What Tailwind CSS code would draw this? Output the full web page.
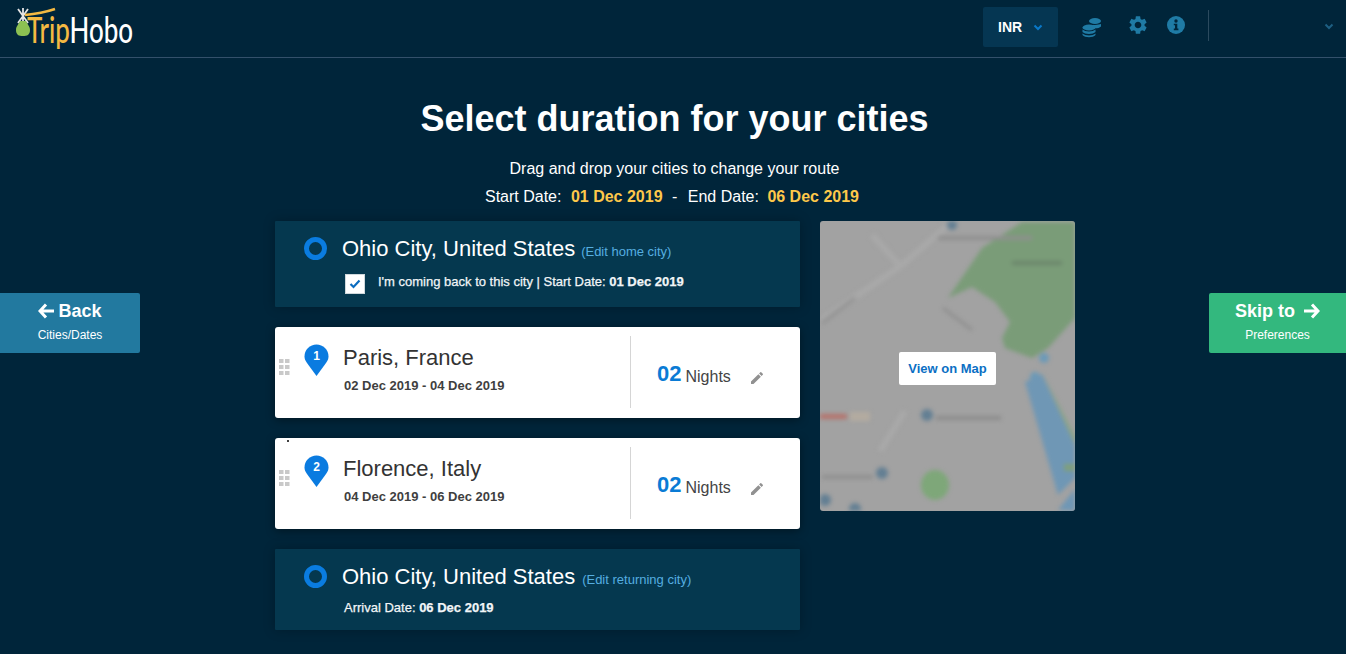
<!DOCTYPE html>
<html lang="en">
<head>
    <meta charset="UTF-8">
    <title>TripHobo - Select duration</title>
    <script src="https://cdn.jsdelivr.net/npm/@tailwindcss/browser@4"></script>
</head>
<body class="w-[1346px] h-[654px] overflow-hidden bg-[#00253a] text-white font-['Liberation_Sans',Arial,sans-serif]">

    <!-- top bar -->
    <header class="h-[58px] flex items-start border-b border-[#33506a]">
        <svg class="ml-[14px] mt-[6px] overflow-visible" width="124" height="48" viewBox="0 0 124 48">
            <path d="M4 3 L14 17 M14 3 L4 17 M9 2 V15" stroke="#e4e4e4" stroke-width="1.8" fill="none"/>
            <path d="M6 15 C5 18 2 20 2 24 C2 29 5 30 9 30 C13 30 16 29 16 24 C16 20 13 18 12 15 Z" fill="#8cc152"/>
            <path d="M11 9 C22 8 32 6 41 3" stroke="#f4b942" stroke-width="2.6" fill="none"/>
            <text x="13" y="37" font-family="Lato" font-size="36" font-weight="500" textLength="106" lengthAdjust="spacingAndGlyphs"><tspan fill="#f4b942">Trip</tspan><tspan fill="#ffffff">Hobo</tspan></text>
        </svg>
        <div class="ml-[845px] mt-[7px] w-[75px] h-[40px] bg-[#053652] flex items-center pl-[15px] rounded-[2px]">
            <span class="text-[14px] font-bold">INR</span>
            <svg class="ml-[11px]" width="10" height="7" viewBox="0 0 10 7"><path d="M1.5 1.5 L5 5 L8.5 1.5" stroke="#0a78c8" stroke-width="2" fill="none"/></svg>
        </div>
        <svg class="ml-[24px] mt-[17px]" width="20" height="21" viewBox="0 0 20 21" fill="#1f7ba5">
            <ellipse cx="13" cy="4" rx="6" ry="3"/>
            <path d="M7 8.5 C9 8 17 8 19 7 V9.5 C17 11.5 13 11.5 11 11 Z"/>
            <ellipse cx="7" cy="10.5" rx="6.5" ry="3"/>
            <path d="M0.5 12.5 C3 15 11 15 13.5 12.5 V15 C11 17.5 3 17.5 0.5 15 Z"/>
            <path d="M0.5 16.5 C3 19 11 19 13.5 16.5 V18 C11 21 3 21 0.5 18 Z"/>
        </svg>
        <svg class="ml-[25px] mt-[14px]" width="22" height="22" viewBox="0 0 24 24" fill="#1f7ba5"><path d="M19.14 12.94c.04-.3.06-.61.06-.94 0-.32-.02-.64-.07-.94l2.03-1.58a.49.49 0 0 0 .12-.61l-1.92-3.32a.488.488 0 0 0-.59-.22l-2.39.96c-.5-.38-1.03-.7-1.62-.94l-.36-2.54a.484.484 0 0 0-.48-.41h-3.84c-.24 0-.43.17-.47.41l-.36 2.54c-.59.24-1.13.57-1.62.94l-2.39-.96c-.22-.08-.47 0-.59.22L2.74 8.87c-.12.21-.08.47.12.61l2.03 1.58c-.05.3-.09.63-.09.94s.02.64.07.94l-2.03 1.58a.49.49 0 0 0-.12.61l1.92 3.32c.12.22.37.29.59.22l2.39-.96c.5.38 1.03.7 1.62.94l.36 2.54c.05.24.24.41.48.41h3.84c.24 0 .44-.17.47-.41l.36-2.54c.59-.24 1.13-.56 1.62-.94l2.39.96c.22.08.47 0 .59-.22l1.92-3.32c.12-.22.07-.47-.12-.61l-2.01-1.58zM12 15.6c-1.98 0-3.6-1.62-3.6-3.6s1.62-3.6 3.6-3.6 3.6 1.62 3.6 3.6-1.62 3.6-3.6 3.6z"/></svg>
        <svg class="ml-[18px] mt-[16px]" width="18" height="18" viewBox="0 0 18 18"><circle cx="9" cy="9" r="9" fill="#1f7ba5"/><circle cx="9" cy="5" r="1.7" fill="#00253a"/><path d="M6.8 7.7 H10.3 V12.6 H11.4 V14.2 H6.8 V12.6 H8 V9.3 H6.8 Z" fill="#00253a"/></svg>
        <div class="ml-[23px] mt-[10px] w-px h-[31px] bg-[#2b4a5e]"></div>
        <svg class="ml-[115px] mt-[23px]" width="10" height="7" viewBox="0 0 10 7"><path d="M1.5 1.5 L5 5 L8.5 1.5" stroke="#1d5f82" stroke-width="2" fill="none"/></svg>
    </header>

    <!-- heading -->
    <div class="text-center pl-[3px]">
        <h1 class="mt-[40px] text-[36px] leading-[42px] font-bold">Select duration for your cities</h1>
        <p class="mt-[19px] text-[16px] leading-[20px]">Drag and drop your cities to change your route</p>
        <p class="mt-[8px] pr-[5px] text-[16px] leading-[20px]">Start Date: <b class="ml-[5px] text-[#fdc84a]">01 Dec 2019</b> <span class="ml-[5px] mr-[6px]">-</span> End Date: <b class="ml-[4px] text-[#fdc84a]">06 Dec 2019</b></p>
    </div>

    <div class="flex mt-[14px] items-start">
        <!-- back -->
        <a class="mt-[72px] w-[140px] h-[60px] bg-[#22799f] rounded-r-[2px] flex flex-col items-center shrink-0">
            <span class="mt-[6px] text-[18px] leading-[24px] font-bold flex items-center gap-[3px]">
                <svg width="17" height="16" viewBox="0 0 17 16"><path d="M8 1.5 L2 8 L8 14.5 M2.5 8 H16" stroke="#fff" stroke-width="3" fill="none"/></svg>Back</span>
            <span class="mt-[4px] text-[12px] leading-[16px]">Cities/Dates</span>
        </a>

        <!-- route -->
        <div class="ml-[135px] w-[525px] shrink-0 flex flex-col gap-[20px]">
            <section class="h-[86px] bg-[#05384f] rounded-[1px] shadow-[0_0_12px_rgba(0,0,0,0.25)] pt-[15px] pl-[29px]">
                <div class="flex items-center h-[24px]">
                    <span class="w-[23px] h-[23px] rounded-full border-[5px] border-[#0a7ce0]"></span>
                    <span class="ml-[15px] mt-[2px] text-[22px] leading-[24px]">Ohio City, United States</span>
                    <span class="ml-[6px] mt-[8px] text-[13px] text-[#55aee0]">(Edit home city)</span>
                </div>
                <div class="flex items-center mt-[14px] ml-[41px]">
                    <span class="w-[20px] h-[20px] bg-white border border-[#cfd8dc] flex items-center justify-center">
                        <svg width="12" height="10" viewBox="0 0 12 10"><path d="M1.5 5 L4.5 8 L10.5 1.5" stroke="#0b6cc0" stroke-width="2.2" fill="none"/></svg>
                    </span>
                    <span class="ml-[13px] text-[13px] text-[#f2f5f7] leading-[18px] -mt-[4px] [-webkit-text-stroke:0.25px]">I'm coming back to this city | Start Date: <b>01 Dec 2019</b></span>
                </div>
            </section>

            <section class="h-[91px] bg-white rounded-[3px] shadow-[0_2px_10px_rgba(0,0,0,0.4)] flex text-[#333]">
                <svg class="ml-[4px] mt-[32px]" width="11" height="17" viewBox="0 0 11 17" fill="#c9c9c9"><rect x="0" y="0" width="4.5" height="4"/><rect x="6" y="0" width="4.5" height="4"/><rect x="0" y="6" width="4.5" height="4"/><rect x="6" y="6" width="4.5" height="4"/><rect x="0" y="12" width="4.5" height="4"/><rect x="6" y="12" width="4.5" height="4"/></svg>
                <div class="relative ml-[14px] mt-[17px] w-[25px] h-[32px]">
                    <svg width="25" height="32" viewBox="0 0 25 32"><path d="M12.5 32 L3 19 C1 16 0.5 14.5 0.5 12.5 A12 12 0 0 1 24.5 12.5 C24.5 14.5 24 16 22 19 Z" fill="#0a7be0"/></svg>
                    <span class="absolute top-[5px] left-0 w-full text-center text-[12px] leading-[14px] font-bold text-white">1</span>
                </div>
                <div class="ml-[14px] mt-[18px]">
                    <div class="text-[22px] leading-[26px]">Paris, France</div>
                    <div class="mt-[6px] ml-[1px] text-[13px] font-bold leading-[18px] text-[#3f3f3f]">02 Dec 2019 - 04 Dec 2019</div>
                </div>
                <div class="ml-auto mt-[9px] w-[170px] h-[72px] border-l border-[#d5d5d5] flex items-start">
                    <span class="ml-[26px] mt-[23px] text-[22px] leading-[30px] font-bold text-[#0a7bd5]">02</span>
                    <span class="ml-[4px] mt-[31px] text-[16px] leading-[20px] text-[#444]">Nights</span>
                    <svg class="ml-[18px] mt-[34px]" width="16" height="16" viewBox="0 0 24 24" fill="#919191"><path d="M3 17.25V21h3.75L17.81 9.94l-3.75-3.75L3 17.25zM20.71 7.04a1 1 0 0 0 0-1.41l-2.34-2.34a1 1 0 0 0-1.41 0l-1.83 1.83 3.75 3.75 1.83-1.83z"/></svg>
                </div>
            </section>

            <section class="relative h-[91px] bg-white rounded-[3px] shadow-[0_2px_10px_rgba(0,0,0,0.4)] flex text-[#333]">
                <span class="absolute left-[12px] top-[2px] w-[2px] h-[2px] bg-black rounded-full"></span>
                <svg class="ml-[4px] mt-[32px]" width="11" height="17" viewBox="0 0 11 17" fill="#c9c9c9"><rect x="0" y="0" width="4.5" height="4"/><rect x="6" y="0" width="4.5" height="4"/><rect x="0" y="6" width="4.5" height="4"/><rect x="6" y="6" width="4.5" height="4"/><rect x="0" y="12" width="4.5" height="4"/><rect x="6" y="12" width="4.5" height="4"/></svg>
                <div class="relative ml-[14px] mt-[17px] w-[25px] h-[32px]">
                    <svg width="25" height="32" viewBox="0 0 25 32"><path d="M12.5 32 L3 19 C1 16 0.5 14.5 0.5 12.5 A12 12 0 0 1 24.5 12.5 C24.5 14.5 24 16 22 19 Z" fill="#0a7be0"/></svg>
                    <span class="absolute top-[5px] left-0 w-full text-center text-[12px] leading-[14px] font-bold text-white">2</span>
                </div>
                <div class="ml-[14px] mt-[18px]">
                    <div class="text-[22px] leading-[26px]">Florence, Italy</div>
                    <div class="mt-[6px] ml-[1px] text-[13px] font-bold leading-[18px] text-[#3f3f3f]">04 Dec 2019 - 06 Dec 2019</div>
                </div>
                <div class="ml-auto mt-[9px] w-[170px] h-[72px] border-l border-[#d5d5d5] flex items-start">
                    <span class="ml-[26px] mt-[23px] text-[22px] leading-[30px] font-bold text-[#0a7bd5]">02</span>
                    <span class="ml-[4px] mt-[31px] text-[16px] leading-[20px] text-[#444]">Nights</span>
                    <svg class="ml-[18px] mt-[34px]" width="16" height="16" viewBox="0 0 24 24" fill="#919191"><path d="M3 17.25V21h3.75L17.81 9.94l-3.75-3.75L3 17.25zM20.71 7.04a1 1 0 0 0 0-1.41l-2.34-2.34a1 1 0 0 0-1.41 0l-1.83 1.83 3.75 3.75 1.83-1.83z"/></svg>
                </div>
            </section>

            <section class="h-[81px] bg-[#05384f] rounded-[1px] shadow-[0_0_12px_rgba(0,0,0,0.25)] pt-[15px] pl-[29px]">
                <div class="flex items-center h-[24px]">
                    <span class="w-[23px] h-[23px] rounded-full border-[5px] border-[#0a7ce0]"></span>
                    <span class="ml-[15px] mt-[2px] text-[22px] leading-[24px]">Ohio City, United States</span>
                    <span class="ml-[7px] mt-[8px] text-[13px] text-[#55aee0]">(Edit returning city)</span>
                </div>
                <div class="mt-[11px] ml-[40px] text-[13px] leading-[18px] text-[#f2f5f7] [-webkit-text-stroke:0.25px]">Arrival Date: <b>06 Dec 2019</b></div>
            </section>
        </div>

        <!-- map preview -->
        <div class="relative ml-[20px] w-[255px] h-[290px] rounded-[3px] overflow-hidden bg-[#a2a2a2] flex items-center justify-center shrink-0">
            <svg class="absolute inset-0 blur-[2px]" width="255" height="290" viewBox="0 0 255 290">
                <path d="M82 44 L128 4 M52 14 L82 47 M0 100 L82 44 M85 190 L60 230" stroke="#a9a9a9" stroke-width="6" fill="none"/>
                <path d="M2 102 L35 77 M123 87 L152 109" stroke="#8c8c8c" stroke-width="2.5" fill="none"/>
                <path d="M128 77 L162 27 L202 1 H255 V97 L228 127 L212 137 L185 127 L182 117 L190 101 L175 81 L152 66 Z" fill="#7a9c78"/>
                <path d="M222 151 L255 215 V224 Z" fill="#8aa582"/>
                <circle cx="224" cy="137" r="5" fill="#6b9ab8"/><circle cx="215" cy="156" r="5" fill="#6b9ab8"/>
                <path d="M205 161 L222 153 L255 224 V257 L238 274 Z" fill="#6f97b5"/>
                <path d="M238 289 L255 268 V290 Z" fill="#6f97b5"/>
                <rect x="244" y="243" width="11" height="7" fill="#7f9f7c"/>
                <ellipse cx="115" cy="264" rx="14" ry="15" fill="#7ea779"/>
                <rect x="0" y="193" width="27" height="5" fill="#b5716a"/>
                <rect x="30" y="191" width="20" height="9" fill="#b3aba0"/>
                <circle cx="107" cy="194" r="6" fill="#637f93"/>
                <rect x="116" y="195" width="65" height="4" fill="#8b8b8b"/>
                <circle cx="62" cy="252" r="6" fill="#637f93"/>
                <rect x="2" y="254" width="51" height="4" fill="#8f8f8f"/>
                <circle cx="5" cy="279" r="6" fill="#637f93"/><circle cx="35" cy="288" r="6" fill="#637f93"/>
                <circle cx="132" cy="4" r="5" fill="#637f93"/>
                <rect x="118" y="15" width="94" height="4" fill="#8f8f8f"/>
                <rect x="192" y="40" width="50" height="4" fill="#6b866b"/>
            </svg>
            <button class="relative mt-[5px] w-[97px] h-[33px] bg-white rounded-[2px] text-[13px] font-bold text-[#0b6fc4]">View on Map</button>
        </div>

        <!-- skip -->
        <a class="ml-auto mt-[72px] w-[137px] h-[60px] bg-[#33b87e] rounded-l-[2px] flex flex-col items-center shrink-0">
            <span class="mt-[6px] text-[18px] leading-[24px] font-bold flex items-center gap-[8px]">Skip to
                <svg width="17" height="16" viewBox="0 0 17 16"><path d="M9 1.5 L15 8 L9 14.5 M1 8 H14.5" stroke="#fff" stroke-width="3" fill="none"/></svg></span>
            <span class="mt-[4px] text-[12px] leading-[16px]">Preferences</span>
        </a>
    </div>
</body>
</html>
